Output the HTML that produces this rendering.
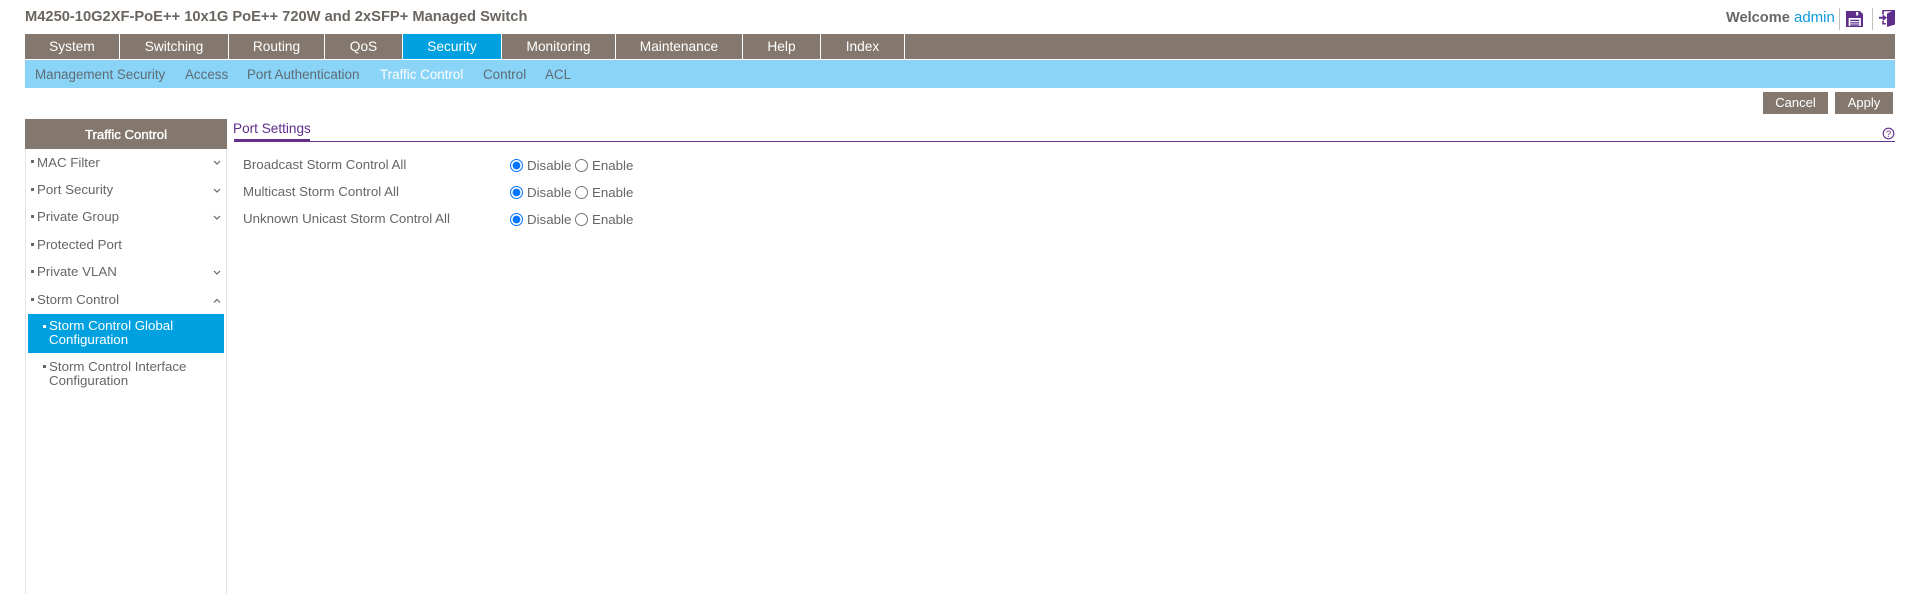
<!DOCTYPE html>
<html><head><meta charset="utf-8"><title>Traffic Control</title>
<style>
html,body{margin:0;padding:0;background:#fff;width:1919px;height:594px;overflow:hidden;font-family:"Liberation Sans",Arial,sans-serif;font-size:13.3px;color:#666}
.a{position:absolute;white-space:nowrap;line-height:16px}
.box{position:absolute}
.tab{position:absolute;top:34px;height:25px;line-height:25px;text-align:center;color:#fff;font-size:13.7px;box-sizing:border-box;border-right:1px solid #fff;background:#84786e}
.sub{position:absolute;top:67px;line-height:16px;color:#5e6b75;font-size:13.4px;white-space:nowrap}
.chev{position:absolute;left:212px;width:10px;height:6px}
.sq{position:absolute;width:3px;height:3px;background:#666}
input{position:absolute;margin:0;width:13px;height:13px;accent-color:#0075ff}
.lab{position:absolute;white-space:nowrap;line-height:16px}
</style></head><body>
<div class="a" style="left:25px;top:9px;font-weight:bold;font-size:14.7px;color:#6b6560">M4250-10G2XF-PoE++ 10x1G PoE++ 720W and 2xSFP+ Managed Switch</div>
<div class="a" style="left:1726px;top:10px;font-weight:bold;font-size:14.6px;color:#666">Welcome</div>
<div class="a" style="left:1794px;top:10px;font-size:15px;color:#0f9ae0">admin</div>
<div class="box" style="left:1839px;top:8px;width:1px;height:22px;background:#c4bfba"></div>
<div class="box" style="left:1872px;top:8px;width:1px;height:22px;background:#c4bfba"></div>
<svg class="box" style="left:1846px;top:11px" width="17" height="16" viewBox="0 0 16 16" preserveAspectRatio="none"><path fill="#5f2d8c" fill-rule="evenodd" d="M0 0H13L16 3V16H0ZM9.500 1H11.500V4.500H9.500ZM2.500 7H14V15H2.500Z"/><path fill="#5f2d8c" d="M4 8.800h8.500v1.300H4zM4 11.200h8.500v1.300H4zM4 13.400h8.500v1.300H4z"/></svg>
<svg class="box" style="left:1879px;top:10px" width="16" height="17" viewBox="0 0 15 17" preserveAspectRatio="none"><path fill="#5f2d8c" d="M3 0H15V14.500L7.500 17V3.500L12 1.200H4.500V4.500H3ZM3 11H4.500V13H6.500V14.500H3Z"/><path fill="#5f2d8c" d="M0 6.800H3.500V4.500L7.500 7.700 3.500 11V8.700H0Z"/></svg>

<div class="box" style="left:25px;top:34px;width:1870px;height:25px;background:#84786e"></div>
<div class="tab" style="left:25px;width:95px">System</div>
<div class="tab" style="left:120px;width:109px">Switching</div>
<div class="tab" style="left:229px;width:96px">Routing</div>
<div class="tab" style="left:325px;width:78px">QoS</div>
<div class="tab" style="left:403px;width:99px;background:#00a1e0">Security</div>
<div class="tab" style="left:502px;width:114px">Monitoring</div>
<div class="tab" style="left:616px;width:127px">Maintenance</div>
<div class="tab" style="left:743px;width:78px">Help</div>
<div class="tab" style="left:821px;width:84px">Index</div>

<div class="box" style="left:25px;top:60px;width:1870px;height:28px;background:#8ad4f7"></div>
<div class="sub" style="left:35px">Management Security</div>
<div class="sub" style="left:185px">Access</div>
<div class="sub" style="left:247px">Port Authentication</div>
<div class="sub" style="left:380px;color:#fff">Traffic Control</div>
<div class="sub" style="left:483px">Control</div>
<div class="sub" style="left:545px">ACL</div>

<div class="box" style="left:1763px;top:92px;width:65px;height:22px;line-height:22px;background:#84786e;color:#fff;text-align:center;font-size:13px">Cancel</div>
<div class="box" style="left:1835px;top:92px;width:58px;height:22px;line-height:22px;background:#84786e;color:#fff;text-align:center;font-size:13px">Apply</div>

<div class="box" style="left:25px;top:119px;width:202px;height:475px;box-sizing:border-box;border-left:1px solid #e3e3e3;border-right:1px solid #e3e3e3"></div>
<div class="box" style="left:25px;top:120px;width:202px;height:29px;line-height:30px;color:#fff;text-align:center"></div>
<div class="box" style="left:25px;top:119px;width:202px;height:30px;line-height:31px;background:#84786e;color:#fff;text-align:center;font-size:13.2px;-webkit-text-stroke:.35px #fff">Traffic Control</div>

<div class="sq" style="left:31px;top:160px"></div><div class="lab" style="left:37px;top:155px">MAC Filter</div>
<svg class="chev" style="top:160px" viewBox="0 0 10 6"><path d="M2 1l3 3 3-3" fill="none" stroke="#666" stroke-width="1.200"/></svg>
<div class="sq" style="left:31px;top:188px"></div><div class="lab" style="left:37px;top:182px">Port Security</div>
<svg class="chev" style="top:188px" viewBox="0 0 10 6"><path d="M2 1l3 3 3-3" fill="none" stroke="#666" stroke-width="1.200"/></svg>
<div class="sq" style="left:31px;top:215px"></div><div class="lab" style="left:37px;top:209px">Private Group</div>
<svg class="chev" style="top:215px" viewBox="0 0 10 6"><path d="M2 1l3 3 3-3" fill="none" stroke="#666" stroke-width="1.200"/></svg>
<div class="sq" style="left:31px;top:243px"></div><div class="lab" style="left:37px;top:237px">Protected Port</div>
<div class="sq" style="left:31px;top:270px"></div><div class="lab" style="left:37px;top:264px">Private VLAN</div>
<svg class="chev" style="top:270px" viewBox="0 0 10 6"><path d="M2 1l3 3 3-3" fill="none" stroke="#666" stroke-width="1.200"/></svg>
<div class="sq" style="left:31px;top:298px"></div><div class="lab" style="left:37px;top:292px">Storm Control</div>
<svg class="chev" style="top:298px" viewBox="0 0 10 6"><path d="M2 4.500l3-3 3 3" fill="none" stroke="#666" stroke-width="1.200"/></svg>

<div class="box" style="left:28px;top:314px;width:196px;height:39px;background:#00a1e0"></div>
<div class="sq" style="left:43px;top:325px;background:#fff"></div>
<div class="lab" style="left:49px;top:319px;color:#fff;line-height:13.5px">Storm Control Global<br>Configuration</div>
<div class="sq" style="left:43px;top:365px"></div>
<div class="lab" style="left:49px;top:360px;line-height:13.5px">Storm Control Interface<br>Configuration</div>

<div class="a" style="left:233px;top:121px;color:#5f2d8c;font-size:13.6px">Port Settings</div>
<div class="box" style="left:234px;top:139px;width:76px;height:3px;background:#63308c"></div>
<div class="box" style="left:234px;top:141px;width:1661px;height:1px;background:#63308c"></div>
<svg class="box" style="left:1882px;top:127px" width="13" height="13" viewBox="0 0 13 13"><circle cx="6.500" cy="6.500" r="5.300" fill="none" stroke="#5f2d8c" stroke-width="1.100"/><text x="6.500" y="10" text-anchor="middle" font-size="9.500" fill="#5f2d8c" font-family="Liberation Sans">?</text></svg>

<div class="lab" style="left:243px;top:157px">Broadcast Storm Control All</div>
<input type="radio" name="a" checked style="left:510px;top:159px"><div class="lab" style="left:527px;top:158px">Disable</div>
<input type="radio" name="a" style="left:575px;top:159px"><div class="lab" style="left:592px;top:158px">Enable</div>

<div class="lab" style="left:243px;top:184px">Multicast Storm Control All</div>
<input type="radio" name="b" checked style="left:510px;top:186px"><div class="lab" style="left:527px;top:185px">Disable</div>
<input type="radio" name="b" style="left:575px;top:186px"><div class="lab" style="left:592px;top:185px">Enable</div>

<div class="lab" style="left:243px;top:211px">Unknown Unicast Storm Control All</div>
<input type="radio" name="c" checked style="left:510px;top:213px"><div class="lab" style="left:527px;top:212px">Disable</div>
<input type="radio" name="c" style="left:575px;top:213px"><div class="lab" style="left:592px;top:212px">Enable</div>
</body></html>
